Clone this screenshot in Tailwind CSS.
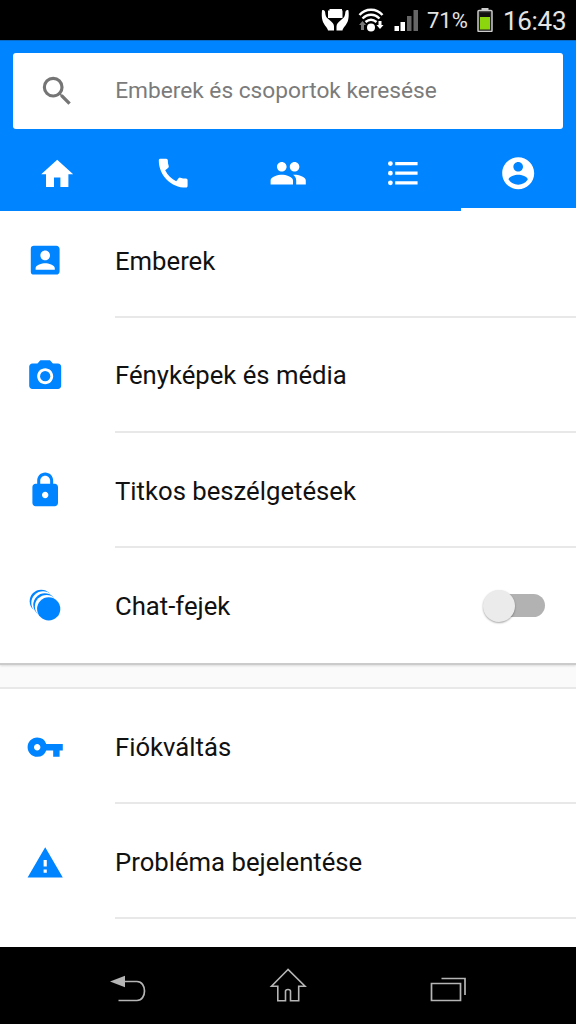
<!DOCTYPE html>
<html lang="hu">
<head>
<meta charset="utf-8">
<title>Messenger</title>
<script src="https://cdn.jsdelivr.net/npm/@tailwindcss/browser@4"></script>
</head>
<body class="w-[576px] h-[1024px] overflow-hidden bg-white font-['Roboto',sans-serif] flex flex-col">

<!-- Status bar -->
<div class="h-10 shrink-0 bg-black flex items-center justify-end pr-[10px] text-[#e4e4e4]">
  <svg class="w-[106px] h-10 shrink-0" viewBox="320 0 106 40">
    <g fill="#fff">
      <path d="M328 10.500h1.500V9H342v1.500h.5V18H328z"/>
      <path d="M322 10.500c1.500-1 3 0 3.200 2 .3 3.500 1 5 4.300 7.500 3 2.300 4.500 4 4.500 6.500v4h-6c-.5-3-4.500-6-5.500-10-.8-3-.9-6-.5-10z"/>
      <path d="M348.500 10.500c-1.500-1-3 0-3.200 2-.3 3.500-1 5-4.300 7.500-3 2.300-4.500 4-4.500 6.500v4h6c.5-3 4.500-6 5.500-10 .8-3 .9-6 .5-10z"/>
      <circle cx="371" cy="27.500" r="4"/>
      <path d="M378.500 21h3v4h2l-3.500 4-3.500-4h2z"/>
    </g>
    <path d="M361 30v-5h-2l3.500-4 3.500 4h-2v5z" fill="#777"/>
    <g fill="none" stroke="#fff" stroke-width="2.400">
      <path d="M359.500 15c6-7 17-7 23 0"/>
      <path d="M362.500 18.500c5-5 12-5 17 0"/>
      <path d="M365.500 22c3.500-3 7.500-3 11 0"/>
    </g>
    <path d="M394.500 26h4.500v5h-4.500zM400.500 22h4.500v9h-4.500z" fill="#fff"/>
    <path d="M407 16h4.500v15H407zM413.500 10h4.500v21h-4.500z" fill="#666"/>
  </svg>
  <span class="w-[51px] text-[22px] leading-10 whitespace-nowrap pl-[1px] pt-[2px]">71%</span>
  <svg class="w-4 h-6 shrink-0" viewBox="0 0 16 24">
    <rect x="4.500" y="0" width="7" height="3" fill="#ccc"/>
    <rect x="1" y="2.500" width="14" height="21" rx="1" fill="#222" stroke="#ccc" stroke-width="1.500"/>
    <rect x="3" y="9" width="10" height="12.500" fill="#8bd60c"/>
    <path d="M3 5h10v4H3z" fill="#111"/>
  </svg>
  <span class="w-[63px] ml-[10px] text-[26px] leading-10 whitespace-nowrap pt-[2px] tracking-[-0.3px]">16:43</span>
</div>

<!-- Search and tabs -->
<header class="h-[171px] shrink-0 bg-[#0084ff] flex flex-col border-t border-[#0b6ac4]">
  <div class="mt-3 mx-[13px] h-[76px] shrink-0 rounded-[3px] bg-white flex items-center pl-[25.4px]">
    <svg class="w-[38.4px] h-[38.4px] shrink-0" viewBox="0 0 24 24" fill="#757575"><path d="M15.500 14h-.79l-.28-.27A6.471 6.471 0 0 0 16 9.500 6.500 6.500 0 1 0 9.500 16c1.610 0 3.090-.59 4.230-1.570l.27.28v.79l5 4.990L20.490 19l-4.990-5zm-6 0C7.010 14 5 11.990 5 9.500S7.010 5 9.500 5 14 7.010 14 9.500 11.990 14 9.500 14z"/></svg>
    <span class="ml-[38.400px] text-[22.700px] leading-none text-[#7b7b7b] whitespace-nowrap">Emberek és csoportok keresése</span>
  </div>
  <nav class="flex-1 grid grid-cols-5 text-white">
    <div class="flex justify-center pt-[26px]"><svg class="w-[38.4px] h-[38.4px]" viewBox="0 0 24 24" fill="currentColor"><path d="M10 20v-6h4v6h5v-8h3L12 3 2 12h3v8z"/></svg></div>
    <div class="flex justify-center pt-[25px]"><svg class="w-[38.4px] h-[38.4px]" viewBox="0 0 24 24" fill="currentColor"><path d="M20.010 15.380c-1.230 0-2.420-.2-3.530-.56a.977.977 0 0 0-1.010.24l-1.570 1.970c-2.830-1.350-5.480-3.900-6.890-6.830l1.950-1.660c.27-.28.35-.67.24-1.020-.37-1.110-.56-2.300-.56-3.530 0-.54-.45-.99-.99-.99H4.190C3.650 3 3 3.240 3 3.990 3 13.280 10.730 21 20.010 21c.71 0 .99-.63.99-1.180v-3.450c0-.54-.45-.99-.99-.99z"/></svg></div>
    <div class="flex justify-center pt-[25px]"><svg class="w-[38.4px] h-[38.4px]" viewBox="0 0 24 24" fill="currentColor"><path d="M16 11c1.660 0 2.990-1.340 2.990-3S17.660 5 16 5s-3 1.340-3 3 1.340 3 3 3zm-8 0c1.660 0 2.990-1.340 2.990-3S9.660 5 8 5 5 6.340 5 8s1.340 3 3 3zm0 2c-2.330 0-7 1.170-7 3.500V19h14v-2.500c0-2.330-4.670-3.500-7-3.500zm8 0c-.29 0-.62.02-.97.05 1.160.84 1.970 1.970 1.970 3.450V19h6v-2.500c0-2.330-4.670-3.500-7-3.500z"/></svg></div>
    <div class="flex justify-center pt-[25px]"><svg class="w-[38.4px] h-[38.4px]" viewBox="0 0 24 24" fill="currentColor"><path d="M4 10.500a1.500 1.500 0 1 0 0 3 1.500 1.500 0 0 0 0-3zm0-6a1.500 1.500 0 1 0 0 3 1.500 1.500 0 0 0 0-3zm0 12a1.500 1.500 0 1 0 0 3 1.500 1.500 0 0 0 0-3zM7 19h14v-2H7v2zm0-6h14v-2H7v2zm0-8v2h14V5H7z"/></svg></div>
    <div class="flex justify-center pt-[24.500px] border-b-[3px] border-white"><svg class="w-[38.4px] h-[38.4px]" viewBox="0 0 24 24" fill="currentColor"><path d="M12 2C6.480 2 2 6.480 2 12s4.480 10 10 10 10-4.480 10-10S17.520 2 12 2zm0 3c1.660 0 3 1.340 3 3s-1.340 3-3 3-3-1.340-3-3 1.340-3 3-3zm0 14.200a7.200 7.200 0 0 1-6-3.220c.03-1.990 4-3.080 6-3.080 1.990 0 5.970 1.090 6 3.080a7.200 7.200 0 0 1-6 3.220z"/></svg></div>
  </nav>
</header>

<!-- Settings list -->
<main class="flex-1 min-h-0 overflow-hidden bg-[#fafafa] text-[#111] text-[25.7px] leading-none">
  <section class="bg-white h-[454px] border-b-2 border-[#cbcbcb] shadow-[0_1px_2px_rgba(0,0,0,0.12)]">
    <div class="h-[107px] flex pl-[25.6px]">
      <svg class="w-[38.4px] h-[38.4px] mt-[29.500px] shrink-0" viewBox="0 0 24 24" fill="#0084ff"><path d="M3 5v14a2 2 0 0 0 2 2h14c1.100 0 2-.9 2-2V5c0-1.100-.9-2-2-2H5a2 2 0 0 0-2 2zm12 4c0 1.660-1.340 3-3 3s-3-1.340-3-3 1.340-3 3-3 3 1.340 3 3zm-9 8c0-2 4-3.100 6-3.100s6 1.100 6 3.100v1H6v-1z"/></svg>
      <div class="ml-[51px] flex-1 flex items-center pb-[4px] border-b-2 border-[#e8e8e8]">Emberek</div>
    </div>
    <div class="h-[115px] flex items-center pl-[25.6px]">
      <svg class="w-[38.4px] h-[38.4px] mt-[2px] shrink-0" viewBox="0 0 24 24" fill="#0084ff"><circle cx="12" cy="12" r="3.200"/><path d="M9 2L7.170 4H4c-1.100 0-2 .9-2 2v12c0 1.100.9 2 2 2h16c1.100 0 2-.9 2-2V6c0-1.100-.9-2-2-2h-3.170L15 2H9zm3 15c-2.760 0-5-2.240-5-5s2.240-5 5-5 5 2.240 5 5-2.240 5-5 5z"/></svg>
      <div class="ml-[51px] flex-1 h-full flex items-center pt-[3px] border-b-2 border-[#e8e8e8]">Fényképek és média</div>
    </div>
    <div class="h-[115px] flex items-center pl-[25.6px]">
      <svg class="w-[38.4px] h-[38.4px] shrink-0" viewBox="0 0 24 24" fill="#0084ff"><path d="M18 8h-1V6c0-2.760-2.240-5-5-5S7 3.240 7 6v2H6c-1.100 0-2 .9-2 2v10c0 1.100.9 2 2 2h12c1.100 0 2-.9 2-2V10c0-1.100-.9-2-2-2zm-6 9c-1.100 0-2-.9-2-2s.9-2 2-2 2 .9 2 2-.9 2-2 2zm3.100-9H8.900V6c0-1.710 1.390-3.100 3.100-3.100s3.100 1.390 3.100 3.100v2z"/></svg>
      <div class="ml-[51px] flex-1 h-full flex items-center pt-[4px] border-b-2 border-[#e8e8e8]">Titkos beszélgetések</div>
    </div>
    <div class="h-[115px] flex items-center pl-[25.6px]">
      <svg class="w-[38.4px] h-[38.4px] shrink-0" viewBox="0 0 38.400 38.400" fill="#0084ff"><circle cx="15.200" cy="15.200" r="11.500"/><circle cx="17" cy="17" r="11.700" fill="#fff"/><circle cx="18.800" cy="18.800" r="11.500"/><circle cx="20.600" cy="20.600" r="11.700" fill="#fff"/><circle cx="22.700" cy="22.900" r="11.600"/></svg>
      <div class="ml-[51px] flex-1 pt-[3px]">Chat-fejek</div>
      <div class="w-[62px] h-8 mr-[31.500px] flex items-center">
        <div class="size-8 rounded-full bg-[#ebebeb] shadow-[0_1px_2px_rgba(0,0,0,0.35)] shrink-0 z-10"></div>
        <div class="-ml-4 flex-1 h-[23px] rounded-r-full bg-[#b2b2b2]"></div>
      </div>
    </div>
  </section>
  <section class="mt-[22px] bg-white h-[260px] border-t-2 border-[#e8e8e8]">
    <div class="h-[115px] flex items-center pl-[25.6px]">
      <svg class="w-[38.4px] h-[38.4px] mt-[2px] shrink-0" viewBox="0 0 24 24" fill="#0084ff"><path d="M12.650 10A5.990 5.990 0 0 0 7 6c-3.310 0-6 2.690-6 6s2.690 6 6 6a5.990 5.990 0 0 0 5.650-4H17v4h4v-4h2v-4H12.650zM7 14c-1.100 0-2-.9-2-2s.9-2 2-2 2 .9 2 2-.9 2-2 2z"/></svg>
      <div class="ml-[51px] flex-1 h-full flex items-center pt-[4px] border-b-2 border-[#e8e8e8]">Fiókváltás</div>
    </div>
    <div class="h-[115px] flex items-center pl-[25.6px]">
      <svg class="w-[38.4px] h-[38.4px] mt-[3px] shrink-0" viewBox="0 0 24 24" fill="#0084ff"><path d="M1 21h22L12 2 1 21zm12-3h-2v-2h2v2zm0-4h-2v-4h2v4z"/></svg>
      <div class="ml-[51px] flex-1 h-full flex items-center pt-[4px] border-b-2 border-[#e8e8e8]">Probléma bejelentése</div>
    </div>
  </section>
</main>

<!-- Navigation bar -->
<footer class="h-[77px] shrink-0 bg-black flex justify-center gap-[116px] pt-5">
  <svg class="w-11 h-11" viewBox="106 967 44 44"><path d="M110 981.500l15-5.800v11.600z" fill="#b5b5b5"/><path d="M124 981.500h13c10 0 10 19 0 19h-18.500" fill="none" stroke="#b5b5b5" stroke-width="1.700"/></svg>
  <svg class="w-11 h-11" viewBox="266 967 44 44" fill="none" stroke="#b5b5b5" stroke-width="1.600"><path d="M288 969.500l-16.500 16.700h6.300v14.600h7.700v-9.500c0-2.500 5-2.500 5 0v9.500h8.200v-14.600h6.300z"/></svg>
  <svg class="w-11 h-11" viewBox="426 967 44 44" fill="none" stroke="#b5b5b5" stroke-width="1.700"><path d="M431.500 983.500h29v17h-29zM441.500 978.500h23.500v16.500"/></svg>
</footer>
</body>
</html>
